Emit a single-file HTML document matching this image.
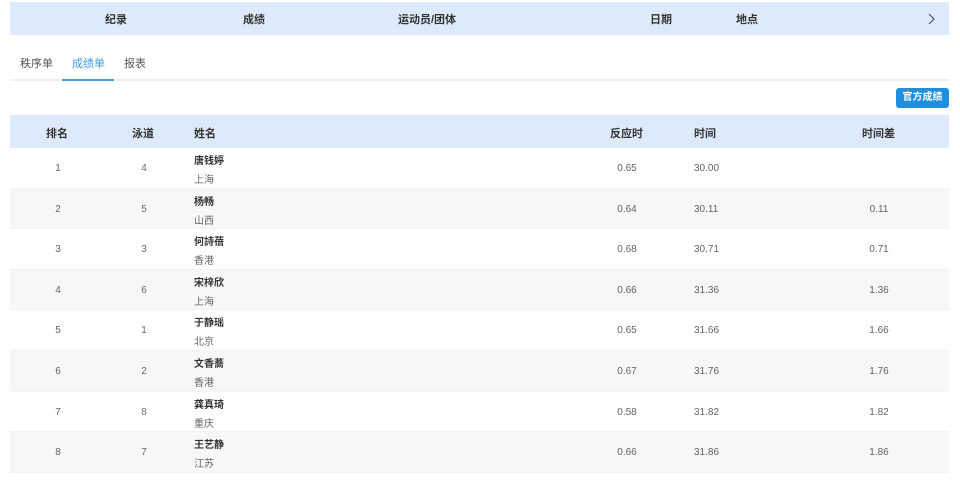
<!DOCTYPE html>
<html><head><meta charset="utf-8"><style>
*{margin:0;padding:0;box-sizing:border-box}
body{width:960px;height:494px;background:#fff;font-family:"Liberation Sans","Noto Sans CJK SC",sans-serif;color:#606266;position:relative;overflow:hidden}
.top{position:absolute;left:10px;top:2px;width:939px;height:33px;background:#ddeafb;font-size:11px;font-weight:bold;color:#333}
.top span{position:absolute;top:9px}
.tabs{position:absolute;left:10px;top:79px;width:939px;height:2px;background:#eef0f4}
.tab{position:absolute;top:55px;font-size:11px;color:#555}
.ul{position:absolute;left:62px;top:79px;width:52px;height:2px;background:#3e9be6}
.btn{position:absolute;left:896px;top:88px;width:53px;height:20px;background:#1f8fe0;border-radius:3px;color:#fff;font-size:10px;font-weight:bold;text-align:center;line-height:20px}
.head{position:absolute;left:10px;top:115px;width:939px;height:33px;background:#ddeafb;font-size:11px;font-weight:bold;color:#333}
.head span,.row span{position:absolute}
.head span{top:10px}
.row{position:absolute;left:10px;width:939px;height:40.6px;font-size:10px;border-bottom:1px solid #f0f2f5}
.row.alt{background:#f7f7f7}
.c{width:60px;text-align:center;top:15px}
.n1{left:184px;top:4px;color:#333;font-weight:bold}
.n2{left:184px;top:23px;color:#666}
</style></head><body>
<div class="top">
<span style="left:95px">纪录</span><span style="left:233px">成绩</span><span style="left:388px">运动员/团体</span><span style="left:640px">日期</span><span style="left:726px">地点</span>
<svg style="position:absolute;left:918px;top:11px" width="8" height="12"><path d="M1 1L6 6L1 11" stroke="#555" stroke-width="1.2" fill="none"/></svg>
</div>
<div class="tab" style="left:20px">秩序单</div>
<div class="tab" style="left:72px;color:#3e9be6">成绩单</div>
<div class="tab" style="left:124px">报表</div>
<div class="tabs"></div><div class="ul"></div>
<div class="btn">官方成绩</div>
<div class="head">
<span style="left:36px">排名</span><span style="left:122px">泳道</span><span style="left:184px">姓名</span><span style="left:600px">反应时</span><span style="left:684px">时间</span><span style="left:852px">时间差</span>
</div>
<div id="rows"></div>
<script>
var d=[["1","4","唐钱婷","上海","0.65","30.00",""],["2","5","杨畅","山西","0.64","30.11","0.11"],["3","3","何詩蓓","香港","0.68","30.71","0.71"],["4","6","宋梓欣","上海","0.66","31.36","1.36"],["5","1","于静瑶","北京","0.65","31.66","1.66"],["6","2","文香蕎","香港","0.67","31.76","1.76"],["7","8","龚真琦","重庆","0.58","31.82","1.82"],["8","7","王艺静","江苏","0.66","31.86","1.86"]];
var h="";d.forEach(function(r,i){h+='<div class="row'+(i%2?' alt':'')+'" style="top:'+(148+i*40.6)+'px"><span class="c" style="left:18px">'+r[0]+'</span><span class="c" style="left:104px;color:#7a6652">'+r[1]+'</span><span class="n1">'+r[2]+'</span><span class="n2">'+r[3]+'</span><span class="c" style="left:587px">'+r[4]+'</span><span style="left:684px;top:15px">'+r[5]+'</span><span class="c" style="left:839px">'+r[6]+'</span></div>'});
document.getElementById("rows").innerHTML=h;
</script>
</body></html>
